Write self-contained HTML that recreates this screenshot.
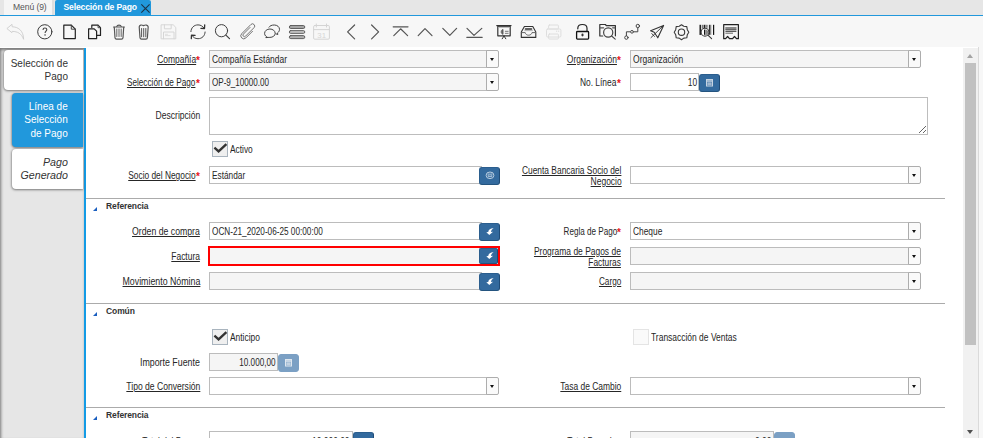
<!DOCTYPE html>
<html><head><meta charset="utf-8">
<style>
*{box-sizing:border-box;margin:0;padding:0}
html,body{width:983px;height:438px;overflow:hidden;background:#fff;font-family:"Liberation Sans",sans-serif;color:#333}
.a{position:absolute}
#tabbar{left:0;top:0;width:983px;height:15px;background:#e6e6e6}
#menutab{left:4px;top:0;width:50px;height:15px;background:#f5f5f5;border-right:2px solid #dedede}
#acttab{left:55px;top:0;width:96px;height:15px;background:#2198dc;border-radius:2px 2px 0 0}
.tt{position:absolute;white-space:nowrap;font-size:8.6px;line-height:10px}
#blueline{left:0;top:15px;width:983px;height:1px;background:#2198dc}
#toolbar{left:0;top:16px;width:983px;height:31px;background:#f7f7f7}
#left{left:0;top:48px;width:84px;height:390px;background:#e6e6e6;box-shadow:inset 1px 2px 3px rgba(0,0,0,.48)}
#vline{left:84px;top:48px;width:2px;height:390px;background:#139be5}
.stab{position:absolute;left:4px;width:79px;background:#fff;border-radius:4px 0 0 4px;box-shadow:0 1px 2.5px rgba(0,0,0,.45),-1px 0 2px rgba(0,0,0,.15);font-size:10px;line-height:13.5px;text-align:right;padding-right:15px;color:#333;white-space:nowrap}
.lbl{position:absolute;font-size:9px;line-height:11px;text-align:right;white-space:nowrap;color:#262626;letter-spacing:-0.2px}
.lbl u{text-decoration:underline}
.req{color:#e8141b;font-size:10px;font-weight:bold;letter-spacing:0;position:relative;top:1px;margin-left:0.3px}
.inp{position:absolute;height:18px;border:1px solid #bcbcbc;background:#f5f5f5;font-size:9px;line-height:18px;padding-left:2px;white-space:nowrap;color:#262626;letter-spacing:-0.2px}
.w{background:#fff}
.dd{position:absolute;width:13px;height:18px;border:1px solid #adadad;border-radius:0 2px 2px 0;background:#fafafa}
.dd:after{content:"";position:absolute;left:2.6px;top:7px;border-left:2.7px solid transparent;border-right:2.7px solid transparent;border-top:3.2px solid #111}
.btn{position:absolute;width:21px;height:18px;background:#336a9e;border-radius:3px;border:1px solid #2b5e8e;border-right-color:#1f4c78;border-bottom-color:#24547f}
.btn svg{position:absolute;left:0;top:0}
.dis{background:#7ba0c4;border-color:#7ba0c4}
.hr{position:absolute;left:86px;width:859px;height:1px;background:#ababab}
.sec{position:absolute;left:106px;font-size:8.5px;line-height:10px;font-weight:bold;color:#333;letter-spacing:-0.1px}
.tri{position:absolute;left:93px;width:0;height:0;border-left:4px solid transparent;border-bottom:4px solid #1a5fc0}
.cb{position:absolute;width:16px;height:16px;border:1px solid #a9b4be;background:#efefef}
textarea{position:absolute;border:1px solid #bdbdbd;background:#fff;outline:none}
.stt{position:absolute;right:915px;font-size:11px;line-height:13.7px;text-align:right;white-space:nowrap;color:#333;transform:scaleX(0.91);transform-origin:right top}
.lb{position:absolute;font-size:10px;line-height:11px;white-space:nowrap;color:#262626}
.sx{display:inline-block}
.lb u{text-decoration:underline}

</style></head><body>
<div id="toolbar" class="a"></div>
<svg class="a" style="left:0;top:0" width="983" height="47" viewBox="0 0 983 47" fill="none" stroke-linecap="round" stroke-linejoin="round">
<!-- undo (disabled) -->
<path d="M7.2 28.3 L12 24.3 L12.2 26.8 C17.5 26.8 23.5 30 23.6 39.3 C21.5 33.5 17.5 31.4 12.2 31.4 L12 32.3 Z" stroke="#cdcdcd" stroke-width="0.9"/>
<!-- help -->
<circle cx="44.8" cy="31.8" r="7.1" stroke="#3a3a3a" stroke-width="1"/>
<path d="M43 29.9 C43 28.6 43.8 28 44.9 28 C46.1 28 46.8 28.7 46.8 29.6 C46.8 31 45.1 31.2 45.1 32.9" stroke="#444" stroke-width="1.1" stroke-linecap="butt"/>
<rect x="44.4" y="34.3" width="1.3" height="1.3" fill="#444" stroke="none"/>
<!-- new -->
<path d="M63.8 25.2 H71.3 L75.3 29.2 V38.6 H63.8 Z" stroke="#222" stroke-width="1.2"/>
<path d="M71.3 25.2 V29.2 H75.3" stroke="#444" stroke-width="1"/>
<!-- copy -->
<path d="M91.8 27.5 V25.2 H98 L100.5 27.7 V35.4 H97" stroke="#222" stroke-width="1.2"/>
<path d="M88.6 28.8 H94.2 L96.6 31.2 V38.7 H88.6 Z" stroke="#222" stroke-width="1.2"/>
<path d="M98 25.2 V27.7 H100.5" stroke="#444" stroke-width="0.9"/>
<!-- delete -->
<path d="M113.6 27 H124.4" stroke="#555" stroke-width="1.2"/>
<path d="M116.8 26.5 C117.2 24.6 120.8 24.6 121.2 26.5" stroke="#555" stroke-width="1.2"/>
<path d="M114.3 27.3 L115 37.8 C115.1 38.8 115.8 39.1 116.5 39.1 H121.5 C122.2 39.1 122.9 38.8 123 37.8 L123.7 27.3" stroke="#555" stroke-width="1.2"/>
<path d="M116.8 29 V36.5 M119 29 V36.5 M121.2 29 V36.5" stroke="#666" stroke-width="1"/>
<!-- delete multi -->
<path d="M139.2 26.8 C139.5 24.8 141.5 24.6 143.5 25.6 C145.5 24.6 147.8 24.8 148.2 26.8 L147.4 37.8 C147.3 38.8 146.6 39.1 145.9 39.1 H141.5 C140.8 39.1 140.1 38.8 140 37.8 Z" stroke="#555" stroke-width="1.2"/>
<path d="M141.6 28.5 V36.8 M143.7 28.5 V36.8 M145.8 28.5 V36.8" stroke="#555" stroke-width="1"/>
<!-- save disabled -->
<path d="M161.5 24.8 H173.2 L175.8 27.4 V38.8 H161.5 Z" stroke="#d6d6d6" stroke-width="1"/>
<path d="M164.4 24.8 V28.8 H171.2 V24.8" stroke="#d6d6d6" stroke-width="1"/>
<path d="M163.5 38.8 V32 H174 V38.8" stroke="#d6d6d6" stroke-width="1"/>
<path d="M165.4 34.3 H167.5 M165.4 35.6 H170.2" stroke="#dcdcdc" stroke-width="0.9"/>
<!-- refresh -->
<path d="M190.9 31.6 C191.1 27.6 194.1 24.9 198 24.9 C200.8 24.9 202.7 26.2 203.9 28" stroke="#444" stroke-width="1"/>
<path d="M204.7 24.8 L204.5 28.5 L200.9 28.3" stroke="#333" stroke-width="1.3"/>
<path d="M205.1 32 C204.9 36 201.9 38.7 198 38.7 C195.2 38.7 193.3 37.4 192.1 35.6" stroke="#444" stroke-width="1"/>
<path d="M191.3 38.6 L191.5 35.1 L195.1 35.3" stroke="#333" stroke-width="1.3"/>
<!-- search -->
<circle cx="221.5" cy="30.7" r="6.1" stroke="#3d3d3d" stroke-width="1"/>
<path d="M225.9 35.1 L229.5 38.6" stroke="#3d3d3d" stroke-width="1.2"/>
<!-- attach -->
<g transform="translate(247.6 32) rotate(45) scale(0.93) translate(-3 -10.8)">
<path d="M1.4 5.5 V15.6 A1.6 1.6 0 0 0 4.6 15.6 V2.6 A2.4 2.4 0 0 0 -0.2 2.6 V16.6 A3.2 3.2 0 0 0 6.2 16.6 V6.5" stroke="#6a6a6a" stroke-width="0.95"/>
</g>
<!-- chat -->
<path d="M266.2 37.6 L266.8 36.8 C264.9 35.9 264.6 34.3 264.6 33.3 C264.6 30.9 267 29 269.9 29 C272.8 29 275.2 30.9 275.2 33.3 C275.2 35.7 272.8 37.4 269.9 37.4 C268.7 37.4 267.6 37.4 266.2 37.6 Z" stroke="#444" stroke-width="1"/>
<path d="M269 27.2 C269.8 25.8 271.7 25 274.3 25 C277.2 25 279.5 26.9 279.5 29.3 C279.5 30.8 278.8 32 277.5 32.9 L277.8 34.6 L275.9 33.8" stroke="#444" stroke-width="1"/>
<!-- grid -->
<rect x="289.3" y="25.5" width="15.5" height="3" rx="1.5" fill="#a5a5a5" stroke="#555" stroke-width="0.9"/>
<rect x="289.3" y="30.6" width="15.5" height="2.8" rx="1.4" fill="#c4c4c4" stroke="#5a5a5a" stroke-width="0.9"/>
<rect x="289.3" y="35.6" width="15.5" height="3" rx="1.5" fill="#b0b0b0" stroke="#555" stroke-width="0.9"/>
<!-- calendar disabled -->
<rect x="313.6" y="25.5" width="15.8" height="13.7" rx="1.2" stroke="#d4d4d4" stroke-width="1"/>
<path d="M313.6 29.6 H329.4 M316.3 24 V27 M326.5 24 V27" stroke="#d4d4d4" stroke-width="1"/>
<text x="317.3" y="37.7" font-family="Liberation Sans" font-size="7.8" fill="#d6d6d6" stroke="none">31</text>
<!-- prev / next -->
<path d="M354.6 25 L347.6 31.9 L354.6 38.9" stroke="#555" stroke-width="1.2"/>
<path d="M371.6 25 L378.6 31.9 L371.6 38.9" stroke="#555" stroke-width="1.2"/>
<!-- first -->
<path d="M393.2 26.8 H408 M393.8 35.6 L400.6 28.8 L407.6 35.6" stroke="#555" stroke-width="1.2"/>
<!-- up -->
<path d="M418.2 35.6 L425 28.6 L432 35.6" stroke="#555" stroke-width="1.2"/>
<!-- down -->
<path d="M442.8 28.4 L449.8 35.4 L456.6 28.4" stroke="#555" stroke-width="1.2"/>
<!-- last -->
<path d="M467 28.4 L474 35.4 L481.8 28.4 M466.8 37.3 H482.2" stroke="#555" stroke-width="1.2"/>
<!-- report -->
<path d="M496.8 25.6 H511" stroke="#333" stroke-width="1.3"/>
<rect x="497.8" y="26.4" width="12.4" height="9.4" stroke="#333" stroke-width="1.2"/>
<path d="M498.5 27.2 H509.5" stroke="#aaa" stroke-width="1.1"/>
<path d="M503.5 29.6 A2.4 2.4 0 1 0 503.5 34.3 Z" fill="#777" stroke="none"/>
<path d="M502.6 29.4 V34.3" stroke="#555" stroke-width="0.8"/>
<path d="M505.3 31.3 H508.2 M505.3 33.3 H508.2" stroke="#666" stroke-width="0.9"/>
<path d="M504 36 L502.2 38.8 M504 36 L505.8 38.8" stroke="#333" stroke-width="1"/>
<!-- archive -->
<path d="M521.3 37.4 V32 L524.4 26.5 H532.8 L535.8 32 V37.4 Z" stroke="#333" stroke-width="1.1"/>
<path d="M522 32.6 H525.2 C525.6 34.2 526.8 35.2 528.6 35.2 C530.4 35.2 531.6 34.2 532 32.6 H535.2" stroke="#666" stroke-width="1"/>
<path d="M525.5 29 H531.5" stroke="#333" stroke-width="1.6"/>
<path d="M524.8 30.6 H532.4" stroke="#aaa" stroke-width="0.9"/>
<!-- print disabled -->
<rect x="548.6" y="25" width="9.8" height="4" rx="0.8" stroke="#dedede" stroke-width="1"/>
<rect x="546.5" y="29" width="14.4" height="8" rx="1.2" stroke="#dedede" stroke-width="1"/>
<rect x="548.6" y="34" width="9.8" height="5" rx="0.8" stroke="#dedede" stroke-width="1"/>
<path d="M556.4 31.2 H556.8 M558.4 31.2 H558.8" stroke="#d8d8d8" stroke-width="0.9"/>
<!-- lock -->
<path d="M577.8 28.8 V28.3 C577.8 25.9 579.8 24.5 582.4 24.5 C585 24.5 587 25.9 587 28.3 V31" stroke="#222" stroke-width="1.2"/>
<rect x="576.6" y="31.5" width="12" height="7.6" rx="0.8" stroke="#111" stroke-width="1.3"/>
<ellipse cx="582.5" cy="35" rx="1.1" ry="1.4" fill="#333" stroke="none"/>
<!-- zoom across -->
<path d="M602.7 36 H599.8 V24.5 H605.4 L606.3 25.6 H615.4 V35.8" stroke="#333" stroke-width="1.2"/>
<path d="M600.2 27.8 H603.6 M612.6 27.8 H615" stroke="#555" stroke-width="1.2"/>
<circle cx="608.2" cy="32.5" r="4.6" stroke="#444" stroke-width="1.2"/>
<path d="M611.6 36 L615.2 39.2" stroke="#444" stroke-width="1.1"/>
<!-- workflow -->
<path d="M626.4 36 V31.8 H630.6 M633.4 31.8 H637.8 V27.7" stroke="#444" stroke-width="1"/>
<circle cx="626.4" cy="37.6" r="1.7" fill="#f7f7f7" stroke="#444" stroke-width="1"/>
<circle cx="632" cy="31.8" r="1.4" fill="#f7f7f7" stroke="#555" stroke-width="1"/>
<circle cx="637.8" cy="26" r="1.7" fill="#f7f7f7" stroke="#444" stroke-width="1"/>
<!-- send -->
<path d="M663.6 25.4 L650.6 30.7 L654.2 32.3 L657.8 37.8 Z" stroke="#333" stroke-width="1.1"/>
<path d="M663.6 25.4 L651 37.6 M651.8 33.6 L654.4 36.4" stroke="#333" stroke-width="0.9"/>
<!-- settings gear -->
<g transform="translate(0 0.4)"><path d="M681.5 24.3 L683.8 25.9 L686.8 26.2 L687.3 29.3 L688.8 31.8 L687.3 34.3 L686.8 37.4 L683.8 37.7 L681.5 39.3 L679.2 37.7 L676.2 37.4 L675.7 34.3 L674.2 31.8 L675.7 29.3 L676.2 26.2 L679.2 25.9 Z" stroke="#3a3a3a" stroke-width="1.1"/>
<circle cx="681.5" cy="31.8" r="3.2" stroke="#3a3a3a" stroke-width="1.1"/></g>
<!-- barcode magnifier -->
<g stroke="none">
<rect x="699" y="24.8" width="0.7" height="10.1" fill="#999"/>
<rect x="699.7" y="24.8" width="1.4" height="10.1" fill="#222"/>
<rect x="701.9" y="24.8" width="0.8" height="3.6" fill="#444"/>
<rect x="703.6" y="24.8" width="1.6" height="3.4" fill="#222"/>
<rect x="705.2" y="24.8" width="2.5" height="3" fill="#888"/>
<rect x="708.9" y="24.8" width="1.1" height="10" fill="#333"/>
<rect x="710" y="24.8" width="1.3" height="10" fill="#8a8a8a"/>
<rect x="713" y="24.8" width="1.2" height="10.1" fill="#111"/>
</g>
<circle cx="705" cy="32.2" r="3.9" fill="#fff" stroke="#3a3a3a" stroke-width="1.1"/>
<rect x="704" y="29.6" width="1.3" height="5.2" fill="#111" stroke="none"/>
<path d="M705.3 29.4 A2.8 2.8 0 0 1 705.3 35 Z" fill="#8a8a8a" stroke="none"/>
<path d="M707.9 35.2 L711.6 38.6" stroke="#333" stroke-width="1.1"/>
<!-- receipt -->
<path d="M723.7 24.6 H738.4 V38.7 H736.5 L734.5 36.5 L732.6 38.7 H729.5 L727.6 36.5 L725.6 38.7 H723.7 Z" stroke="#222" stroke-width="1.2"/>
<path d="M725.8 28 H736 M725.8 29.6 H736" stroke="#666" stroke-width="1.4"/>
<path d="M725.8 31.3 H736" stroke="#333" stroke-width="1"/>
<path d="M725.8 33.2 H732.6" stroke="#555" stroke-width="0.9"/>
</svg>

<div id="tabbar" class="a" style="top:0"></div>
<div id="menutab" class="a"></div>
<div class="tt" style="left:13px;top:2px;color:#555;letter-spacing:-0.1px">Menú (9)</div>
<div id="acttab" class="a"></div>
<div class="tt" style="left:63.5px;top:2px;color:#fff;font-weight:bold;letter-spacing:-0.15px">Selección de Pago</div>
<svg class="a" style="left:140px;top:3px" width="11" height="11" viewBox="0 0 11 11"><path d="M1.3 1.3L9.6 9.6M9.6 1.3L1.3 9.6" stroke="#1b3346" stroke-width="1.1"/></svg>
<div id="blueline" class="a"></div>

<div id="left" class="a"></div>
<div id="vline" class="a"></div>
<div class="stab" style="top:50px;height:40px"></div>
<div class="stt" style="top:56.5px">Selección de<br>Pago</div>
<div class="stab" style="left:12px;width:71px;top:93px;height:54px;background:#2198dc"></div>
<div class="stt" style="top:99.5px;color:#fff">Línea de<br>Selección<br>de Pago</div>
<div class="stab" style="left:12px;width:71px;top:149px;height:40px"></div>
<div class="stt" style="top:155.5px;font-style:italic;transform:scaleX(0.97)">Pago<br>Generado</div>
<!-- row 1 -->
<div class="inp" style="left:209px;top:50px;width:278px"></div>
<div class="dd" style="left:486px;top:50px"></div>
<div class="inp" style="left:630px;top:50px;width:279px"></div>
<div class="dd" style="left:908px;top:50px"></div>
<!-- row 2 -->
<div class="inp" style="left:209px;top:73px;width:278px"></div>
<div class="dd" style="left:486px;top:73px"></div>
<div class="inp w" style="left:630px;top:73px;width:69px;text-align:right;padding-right:2px"></div>
<div class="btn" style="left:699px;top:74px"><svg style="left:-1px;top:-1px" width="21" height="18" viewBox="0 0 21 18"><rect x="7.5" y="5.5" width="6" height="6.5" fill="none" stroke="#c5d3e2" stroke-width="1"/><path d="M8 7 H13" stroke="#c5d3e2" stroke-width="1.5"/><rect x="8.3" y="8.3" width="4.4" height="3" fill="#9fb7d0"/></svg></div>
<!-- descripcion -->
<textarea style="left:209px;top:97px;width:719px;height:38px"></textarea>
<!-- activo -->
<div class="cb" style="left:212px;top:141px"><svg class="a" style="left:-1px;top:-1px" width="16" height="16" viewBox="0 0 16 16"><path d="M2.4 6.6 L6.6 10.4 L14.4 3.2" fill="none" stroke="#333" stroke-width="2.3"/></svg></div>
<!-- socio -->
<div class="inp w" style="left:209px;top:166px;width:273px"></div>
<div class="btn" style="left:479px;top:167px"><svg style="left:-1px;top:-1px" width="21" height="18" viewBox="0 0 21 18"><ellipse cx="11" cy="8.3" rx="3.9" ry="3.3" fill="none" stroke="#b9cde0" stroke-width="1"/><path d="M9.2 6.4 V9.6 H12.8 V6.4" fill="none" stroke="#b9cde0" stroke-width="0.9"/><path d="M10.4 6.6 H11.6 V8.4 H10.4 Z" fill="#b9cde0"/></svg></div>
<div class="inp w" style="left:630px;top:166px;width:279px"></div>
<div class="dd" style="left:908px;top:166px"></div>

<div class="hr" style="top:198px"></div>
<div class="tri" style="top:207px"></div>
<div class="sec" style="top:201px">Referencia</div>

<div class="inp w" style="left:209px;top:222px;width:273px"></div>
<div class="btn" style="left:479px;top:223px"><svg style="left:-1px;top:-1px" width="21" height="18" viewBox="0 0 21 18"><path d="M14.6 5.3 C12 5.1 9.6 6.3 9.2 9.0 L7.3 9.3 L10.3 12.1 L14.1 8.8 L12.0 8.9 C12.2 7.3 13.1 6.0 14.6 5.3 Z" fill="#fff"/></svg></div>
<div class="inp w" style="left:630px;top:222px;width:279px"></div>
<div class="dd" style="left:908px;top:222px"></div>

<div class="inp" style="left:208px;top:246px;width:292px;height:20px;border:2px solid #f00"></div>
<div class="btn" style="left:479px;top:248px;height:16px;width:19px;border-radius:2px"><svg style="left:-1px;top:-2px" width="21" height="18" viewBox="0 0 21 18"><path d="M14.6 5.3 C12 5.1 9.6 6.3 9.2 9.0 L7.3 9.3 L10.3 12.1 L14.1 8.8 L12.0 8.9 C12.2 7.3 13.1 6.0 14.6 5.3 Z" fill="#fff"/></svg></div>
<div class="inp" style="left:630px;top:247px;width:279px"></div>
<div class="dd" style="left:908px;top:247px"></div>

<div class="inp" style="left:209px;top:272px;width:273px"></div>
<div class="btn" style="left:479px;top:273px"><svg style="left:-1px;top:-1px" width="21" height="18" viewBox="0 0 21 18"><path d="M14.6 5.3 C12 5.1 9.6 6.3 9.2 9.0 L7.3 9.3 L10.3 12.1 L14.1 8.8 L12.0 8.9 C12.2 7.3 13.1 6.0 14.6 5.3 Z" fill="#fff"/></svg></div>
<div class="inp" style="left:630px;top:272px;width:279px"></div>
<div class="dd" style="left:908px;top:272px"></div>

<div class="hr" style="top:303px"></div>
<div class="tri" style="top:312px"></div>
<div class="sec" style="top:306px">Común</div>

<div class="cb" style="left:212px;top:329px"><svg class="a" style="left:-1px;top:-1px" width="16" height="16" viewBox="0 0 16 16"><path d="M2.4 6.6 L6.6 10.4 L14.4 3.2" fill="none" stroke="#333" stroke-width="2.3"/></svg></div>
<div class="cb" style="left:633px;top:329px;background:#fafafa;border-color:#e4e4e4"></div>

<div class="inp" style="left:209px;top:353px;width:69px;text-align:right;padding-right:2px"></div>
<div class="btn dis" style="left:278px;top:354px"><svg style="left:-1px;top:-1px" width="21" height="18" viewBox="0 0 21 18"><rect x="7.5" y="5.5" width="6" height="6.5" fill="none" stroke="#dfe7ef" stroke-width="1"/><path d="M8 7 H13" stroke="#dfe7ef" stroke-width="1.5"/><rect x="8.3" y="8.3" width="4.4" height="3" fill="#c2d2e2"/></svg></div>

<div class="inp w" style="left:209px;top:377px;width:278px"></div>
<div class="dd" style="left:486px;top:377px"></div>
<div class="inp w" style="left:630px;top:377px;width:279px"></div>
<div class="dd" style="left:908px;top:377px"></div>

<div class="hr" style="top:407px"></div>
<div class="tri" style="top:416px"></div>
<div class="sec" style="top:410px">Referencia</div>

<div class="inp w" style="left:209px;top:431px;width:144px;text-align:right;padding-right:3px"></div>
<div class="btn" style="left:353px;top:432px"></div>
<div class="inp" style="left:630px;top:431px;width:144px;text-align:right;padding-right:3px"></div>
<div class="btn dis" style="left:774px;top:432px"></div>

<!-- scrollbar -->
<div class="a" style="left:963px;top:48px;width:15px;height:390px;background:#f1f1f1"></div>
<div class="a" style="left:978px;top:47px;width:1px;height:391px;background:#dadada"></div>
<div class="a" style="left:979px;top:47px;width:4px;height:391px;background:#f7f7f7"></div>
<div class="a" style="left:965px;top:63px;width:11px;height:282px;background:#c1c1c1"></div>
<div class="a" style="left:966.7px;top:54px;border-left:3.7px solid transparent;border-right:3.7px solid transparent;border-bottom:4.2px solid #a3a3a3"></div>
<div class="a" style="left:966.7px;top:429.8px;border-left:3.7px solid transparent;border-right:3.7px solid transparent;border-top:4.2px solid #505050"></div>

<div class="lb" style="right:783.0px;top:54px;text-align:right"><span class="sx" style="transform:scaleX(0.845);transform-origin:right"><u>Compañía</u></span><span class="req">*</span></div>
<div class="lb" style="right:783.0px;top:77px;text-align:right"><span class="sx" style="transform:scaleX(0.821);transform-origin:right"><u>Selección de Pago</u></span><span class="req">*</span></div>
<div class="lb" style="right:783.0px;top:110px;text-align:right"><span class="sx" style="transform:scaleX(0.856);transform-origin:right">Descripción</span></div>
<div class="lb" style="left:230px;top:144px"><span class="sx" style="transform:scaleX(0.834);transform-origin:left">Activo</span></div>
<div class="lb" style="right:783.0px;top:170px;text-align:right"><span class="sx" style="transform:scaleX(0.836);transform-origin:right"><u>Socio del Negocio</u></span><span class="req">*</span></div>
<div class="lb" style="right:783.0px;top:226px;text-align:right"><span class="sx" style="transform:scaleX(0.871);transform-origin:right"><u>Orden de compra</u></span></div>
<div class="lb" style="right:783.0px;top:251px;text-align:right"><span class="sx" style="transform:scaleX(0.844);transform-origin:right"><u>Factura</u></span></div>
<div class="lb" style="right:783.0px;top:276px;text-align:right"><span class="sx" style="transform:scaleX(0.881);transform-origin:right"><u>Movimiento Nómina</u></span></div>
<div class="lb" style="left:230px;top:332px"><span class="sx" style="transform:scaleX(0.840);transform-origin:left">Anticipo</span></div>
<div class="lb" style="right:783.0px;top:357px;text-align:right"><span class="sx" style="transform:scaleX(0.883);transform-origin:right">Importe Fuente</span></div>
<div class="lb" style="right:783.0px;top:381px;text-align:right"><span class="sx" style="transform:scaleX(0.857);transform-origin:right"><u>Tipo de Conversión</u></span></div>
<div class="lb" style="right:783.0px;top:436px;text-align:right"><span class="sx" style="transform:scaleX(0.840);transform-origin:right">Total del Pago</span><span class="req">*</span></div>
<div class="lb" style="right:362.0px;top:54px;text-align:right"><span class="sx" style="transform:scaleX(0.850);transform-origin:right"><u>Organización</u></span><span class="req">*</span></div>
<div class="lb" style="right:362.0px;top:77px;text-align:right"><span class="sx" style="transform:scaleX(0.840);transform-origin:right">No. Línea</span><span class="req">*</span></div>
<div class="lb" style="right:361.8px;top:165px;text-align:right"><span class="sx" style="transform:scaleX(0.840);transform-origin:right"><u>Cuenta Bancaria Socio del</u></span></div>
<div class="lb" style="right:361.8px;top:176px;text-align:right"><span class="sx" style="transform:scaleX(0.847);transform-origin:right"><u>Negocio</u></span></div>
<div class="lb" style="right:362.0px;top:226px;text-align:right"><span class="sx" style="transform:scaleX(0.810);transform-origin:right">Regla de Pago</span><span class="req">*</span></div>
<div class="lb" style="right:361.8px;top:246px;text-align:right"><span class="sx" style="transform:scaleX(0.845);transform-origin:right"><u>Programa de Pagos de</u></span></div>
<div class="lb" style="right:361.8px;top:257px;text-align:right"><span class="sx" style="transform:scaleX(0.838);transform-origin:right"><u>Facturas</u></span></div>
<div class="lb" style="right:361.8px;top:276px;text-align:right"><span class="sx" style="transform:scaleX(0.818);transform-origin:right"><u>Cargo</u></span></div>
<div class="lb" style="left:651.2px;top:332px"><span class="sx" style="transform:scaleX(0.846);transform-origin:left">Transacción de Ventas</span></div>
<div class="lb" style="right:362.0px;top:381px;text-align:right"><span class="sx" style="transform:scaleX(0.843);transform-origin:right"><u>Tasa de Cambio</u></span></div>
<div class="lb" style="right:362.0px;top:436px;text-align:right"><span class="sx" style="transform:scaleX(0.840);transform-origin:right">Total Pagado</span><span class="req">*</span></div>
<div class="lb tx" style="left:212px;top:54px"><span class="sx" style="transform:scaleX(0.843);transform-origin:left">Compañía Estándar</span></div>
<div class="lb tx" style="left:212px;top:77px"><span class="sx" style="transform:scaleX(0.807);transform-origin:left">OP-9_10000.00</span></div>
<div class="lb tx" style="left:212px;top:170px"><span class="sx" style="transform:scaleX(0.829);transform-origin:left">Estándar</span></div>
<div class="lb tx" style="left:212px;top:226px"><span class="sx" style="transform:scaleX(0.820);transform-origin:left">OCN-21_2020-06-25 00:00:00</span></div>
<div class="lb tx" style="right:707.7px;top:357px;text-align:right"><span class="sx" style="transform:scaleX(0.813);transform-origin:right">10.000,00</span></div>
<div class="lb tx" style="left:633px;top:54px"><span class="sx" style="transform:scaleX(0.852);transform-origin:left">Organización</span></div>
<div class="lb tx" style="right:286.3px;top:77px;text-align:right"><span class="sx" style="transform:scaleX(0.840);transform-origin:right">10</span></div>
<div class="lb tx" style="left:632.7px;top:226px"><span class="sx" style="transform:scaleX(0.836);transform-origin:left">Cheque</span></div>
<div class="lb tx" style="right:633.5px;top:436px;text-align:right"><span class="sx" style="transform:scaleX(0.840);transform-origin:right">10.000,00</span></div>
<div class="lb tx" style="right:212.0px;top:436px;text-align:right"><span class="sx" style="transform:scaleX(0.840);transform-origin:right">0,00</span></div>
</body></html>
